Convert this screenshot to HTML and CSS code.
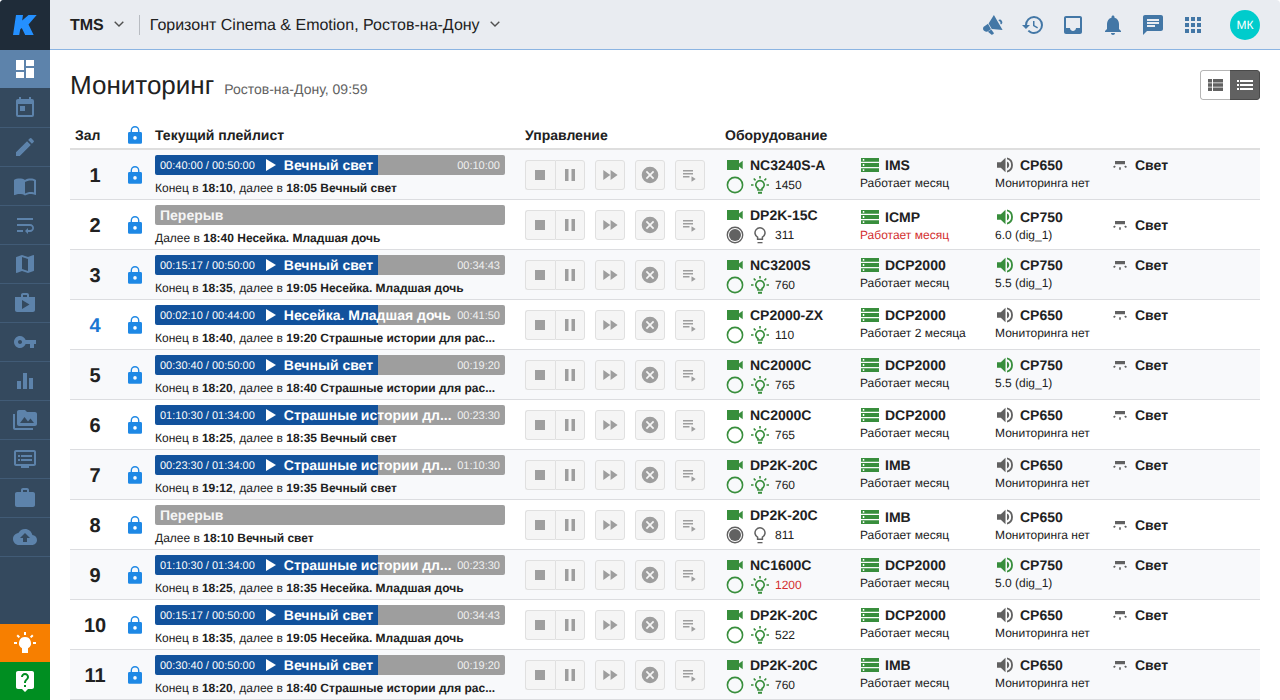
FILE: index.html
```html
<!DOCTYPE html>
<html lang="ru">
<head>
<meta charset="utf-8">
<title>TMS — Мониторинг</title>
<link rel="stylesheet" href="styles.css">
</head>
<body>
<svg class="sprite" aria-hidden="true">
  <symbol id="i-logo" viewBox="0 0 24 24"><path d="M3 2h7l-.8 5.500L15.500 2h8.200L15.500 11.500 20.700 22h-8.500L8.800 15 7.300 16.300 6.200 22H0Z"/></symbol>
  <symbol id="i-dashboard" viewBox="0 0 24 24"><path d="M3 13h8V3H3v10zm0 8h8v-6H3v6zm10 0h8V11h-8v10zm0-18v6h8V3h-8z"/></symbol>
  <symbol id="i-calendar" viewBox="0 0 24 24"><path d="M7,10H12V15H7M19,19H5V8H19M19,3H18V1H16V3H8V1H6V3H5C3.89,3 3,3.9 3,5V19A2,2 0 0,0 5,21H19A2,2 0 0,0 21,19V5A2,2 0 0,0 19,3Z"/></symbol>
  <symbol id="i-pencil" viewBox="0 0 24 24"><path d="M3 17.250V21h3.750L17.810 9.940l-3.750-3.750L3 17.250zM20.710 7.040c.39-.39.39-1.020 0-1.410l-2.340-2.340a1 1 0 0 0-1.410 0l-1.830 1.830 3.750 3.750 1.830-1.830z"/></symbol>
  <symbol id="i-book" viewBox="0 0 24 24"><path d="M21 5c-1.110-.35-2.330-.5-3.500-.5-1.950 0-4.050.4-5.500 1.500-1.450-1.100-3.550-1.500-5.500-1.500S2.450 4.900 1 6v14.650c0 .25.25.5.5.5.1 0 .15-.05.25-.05C3.100 20.450 5.050 20 6.500 20c1.950 0 4.050.4 5.500 1.500 1.350-.85 3.800-1.500 5.500-1.500 1.650 0 3.350.3 4.750 1.050.1.05.15.05.25.05.25 0 .5-.25.5-.5V6c-.6-.45-1.250-.75-2-1zm0 13.500c-1.100-.35-2.300-.5-3.500-.5-1.700 0-4.150.65-5.500 1.500V8c1.350-.85 3.800-1.500 5.500-1.500 1.200 0 2.400.15 3.500.5v11.500z"/></symbol>
  <symbol id="i-wrap" viewBox="0 0 24 24"><path d="M4 19h6v-2H4v2zM20 5H4v2h16V5zm-3 6H4v2h13.250c1.100 0 2 .9 2 2s-.9 2-2 2H15v-2l-3 3 3 3v-2h2c2.210 0 4-1.790 4-4s-1.790-4-4-4z"/></symbol>
  <symbol id="i-map" viewBox="0 0 24 24"><path d="M20.500 3l-.16.03L15 5.100 9 3 3.360 4.900c-.21.07-.36.25-.36.48V20.500c0 .28.22.5.5.5l.16-.03L9 18.900l6 2.100 5.640-1.900c.21-.07.36-.25.36-.48V3.500c0-.28-.22-.5-.5-.5zM15 19l-6-2.110V5l6 2.110V19z"/></symbol>
  <symbol id="i-shop" viewBox="0 0 24 24"><path d="M16 6V4c0-1.110-.89-2-2-2h-4c-1.110 0-2 .89-2 2v2H2v13c0 1.110.89 2 2 2h16c1.110 0 2-.89 2-2V6h-6zm-6-2h4v2h-4V4zM9 18V9l7.500 4.500L9 18z"/></symbol>
  <symbol id="i-key" viewBox="0 0 24 24"><path d="M12.650 10C11.830 7.670 9.610 6 7 6c-3.310 0-6 2.690-6 6s2.690 6 6 6c2.610 0 4.830-1.670 5.650-4H17v4h4v-4h2v-4H12.650zM7 14c-1.100 0-2-.9-2-2s.9-2 2-2 2 .9 2 2-.9 2-2 2z"/></symbol>
  <symbol id="i-chart" viewBox="0 0 24 24"><path d="M10 20h4V4h-4v16zm-6 0h4v-8H4v8zM16 9v11h4V9h-4z"/></symbol>
  <symbol id="i-media" viewBox="0 0 24 24"><path d="M2 6H0v14c0 1.100.9 2 2 2h18v-2H2V6zm20-2h-8l-2-2H6c-1.100 0-2 .9-2 2v12c0 1.100.9 2 2 2h16c1.100 0 2-.9 2-2V6c0-1.100-.9-2-2-2zM7 15l4.500-6 3.500 4.500 2.500-3L21 15H7z"/></symbol>
  <symbol id="i-dvr" viewBox="0 0 24 24"><path d="M21 3H3c-1.100 0-2 .9-2 2v12c0 1.100.9 2 2 2h5v2h8v-2h5c1.100 0 2-.9 2-2V5c0-1.100-.9-2-2-2zm0 14H3V5h18v12zm-2-9H8v2h11V8zm0 4H8v2h11v-2zM7 8H5v2h2V8zm0 4H5v2h2v-2z"/></symbol>
  <symbol id="i-work" viewBox="0 0 24 24"><path d="M20 6h-4V4c0-1.110-.89-2-2-2h-4c-1.110 0-2 .89-2 2v2H4c-1.110 0-2 .89-2 2v11c0 1.110.89 2 2 2h16c1.110 0 2-.89 2-2V8c0-1.110-.89-2-2-2zm-6 0h-4V4h4v2z"/></symbol>
  <symbol id="i-upload" viewBox="0 0 24 24"><path d="M19.350 10.040C18.670 6.590 15.640 4 12 4 9.110 4 6.600 5.640 5.350 8.040 2.340 8.360 0 10.910 0 14c0 3.310 2.690 6 6 6h13c2.760 0 5-2.240 5-5 0-2.640-2.050-4.780-4.650-4.960zM14 13v4h-4v-4H7l5-5 5 5h-3z"/></symbol>
  <symbol id="i-bulb-solid" viewBox="0 0 24 24"><path d="M12 6a6 6 0 0 1 3 11.200V22H9V17.200A6 6 0 0 1 12 6M20 11h3v2h-3zM1 11h3v2H1zM11 1h2v3h-2zM4.920 3.500l2.130 2.140-1.420 1.410L3.500 4.930zM16.950 5.630l2.120-2.130 1.430 1.430-2.130 2.120z"/></symbol>
  <symbol id="i-help" viewBox="0 0 24 24"><path d="M19 2H5c-1.110 0-2 .9-2 2v14c0 1.100.89 2 2 2h4l3 3 3-3h4c1.100 0 2-.9 2-2V4c0-1.100-.9-2-2-2zm-6 16h-2v-2h2v2zm2.070-7.750l-.9.92C13.450 11.900 13 12.500 13 14h-2v-.5c0-1.100.45-2.100 1.170-2.830l1.240-1.260c.37-.36.59-.86.59-1.410 0-1.100-.9-2-2-2s-2 .9-2 2H8c0-2.210 1.790-4 4-4s4 1.790 4 4c0 .88-.36 1.680-.93 2.250z"/></symbol>
  <symbol id="i-chevron" viewBox="0 0 10 6"><path d="M.7.7 5 5 9.300.7" fill="none" stroke="currentColor" stroke-width="1.400"/></symbol>
  <symbol id="i-horn" viewBox="0 0 24 24"><path d="M12.900 2 21.600 17 10.800 15.900 7.600 10.400ZM7 10.800 10 16.300 6.600 18.500A3.200 3.200 0 0 1 4.400 18.600 3.500 3.500 0 0 1 2.400 14ZM10.300 16.600 13 20.300Q12.100 21.900 10.600 21.700L6.900 18.800ZM17.400 7A2.600 2.600 0 0 1 20 11.500L19.200 10.200A1.200 1.200 0 0 0 18.100 8.300Z"/></symbol>
  <symbol id="i-history" viewBox="0 0 24 24"><path d="M13.500 8H12V13L16.280 15.540 17 14.330 13.500 12.250V8M13 3A9 9 0 0 0 4 12H1L4.960 16.030 9 12H6A7 7 0 0 1 13 5 7 7 0 0 1 20 12 7 7 0 0 1 13 19C11.070 19 9.320 18.210 8.060 16.940L6.640 18.360C8.270 20 10.500 21 13 21A9 9 0 0 0 22 12 9 9 0 0 0 13 3"/></symbol>
  <symbol id="i-inbox" viewBox="0 0 24 24"><path d="M19 3H5c-1.100 0-2 .9-2 2v14c0 1.100.9 2 2 2h14c1.100 0 2-.9 2-2V5c0-1.100-.9-2-2-2zm0 12h-4c0 1.660-1.350 3-3 3s-3-1.340-3-3H5V5h14v10z"/></symbol>
  <symbol id="i-bell" viewBox="0 0 24 24"><path d="M12 22c1.100 0 2-.9 2-2h-4c0 1.100.89 2 2 2zm6-6v-5c0-3.070-1.640-5.640-4.500-6.320V4c0-.83-.67-1.500-1.500-1.500s-1.500.67-1.500 1.500v.68C7.630 5.360 6 7.920 6 11v5l-2 2v1h16v-1l-2-2z"/></symbol>
  <symbol id="i-chat" viewBox="0 0 24 24"><path d="M20 2H4c-1.100 0-2 .9-2 2v18l4-4h14c1.100 0 2-.9 2-2V4c0-1.100-.9-2-2-2zM6 9h12v2H6V9zm8 5H6v-2h8v2zm4-6H6V6h12v2z"/></symbol>
  <symbol id="i-apps" viewBox="0 0 24 24"><path d="M4 4h4v4H4zM10 4h4v4h-4zM16 4h4v4h-4zM4 10h4v4H4zM10 10h4v4h-4zM16 10h4v4h-4zM4 16h4v4H4zM10 16h4v4h-4zM16 16h4v4h-4z"/></symbol>
  <symbol id="i-rows" viewBox="0 0 16 12"><path d="M0 0h4v3.500H0zM5 0h10v3.500H5zM0 4.300h4v3.400H0zM5 4.300h10v3.400H5zM0 8.500h4V12H0zM5 8.500h10V12H5z"/></symbol>
  <symbol id="i-list" viewBox="0 0 16 12"><path d="M0 1h2v2H0zM3 1h13v2H3zM0 5h2v2H0zM3 5h13v2H3zM0 9h2v2H0zM3 9h13v2H3z"/></symbol>
  <symbol id="i-lock" viewBox="0 0 14 18"><path fill-rule="evenodd" d="M12.600 6H11.400V4.400a4.400 4.400 0 0 0-8.800 0V6H1.400A1.400 1.400 0 0 0 0 7.400v9a1.400 1.400 0 0 0 1.400 1.400h11.200a1.400 1.400 0 0 0 1.400-1.400V7.400A1.400 1.400 0 0 0 12.600 6ZM7 13.700a1.800 1.800 0 1 1 0-3.600 1.800 1.800 0 0 1 0 3.600ZM10 6H4V4.400a3 3 0 0 1 6 0Z"/></symbol>
  <symbol id="i-play" viewBox="0 0 10 12"><path d="M0 0 10 6 0 12Z"/></symbol>
  <symbol id="i-stop" viewBox="0 0 18 18"><path d="M4 4h10v10H4z"/></symbol>
  <symbol id="i-pause" viewBox="0 0 18 18"><path d="M4 3h3.500v12H4zM10.500 3H14v12h-3.500z"/></symbol>
  <symbol id="i-forward" viewBox="0 0 18 18"><path d="M2.300 4l7 5-7 5zM9.600 4l7 5-7 5z"/></symbol>
  <symbol id="i-cancel" viewBox="0 0 18 18"><path fill-rule="evenodd" d="M9 .7a8.300 8.300 0 1 0 0 16.600A8.300 8.300 0 0 0 9 .7Zm4.200 11.300L12 13.200l-3-3-3 3L4.800 12l3-3-3-3L6 4.800l3 3 3-3L13.200 6l-3 3z"/></symbol>
  <symbol id="i-queue" viewBox="0 0 18 18"><path d="M2 4h10v1.500H2zM2 7h10v1.500H2zM2 10h6.500v1.500H2zM10.500 10.300l4.200 2.700-4.200 2.700z"/></symbol>
  <symbol id="i-camera" viewBox="0 0 16 10"><path d="M0 0H12V3.500L15.700.7V9.300L12 6.500V10H0Z"/></symbol>
  <symbol id="i-ring" viewBox="0 0 18 18"><circle cx="9" cy="9" r="7.600" fill="none" stroke="currentColor" stroke-width="1.600"/></symbol>
  <symbol id="i-disc" viewBox="0 0 18 18"><circle cx="9" cy="9" r="7.700" fill="none" stroke="currentColor" stroke-width="1.400"/><circle cx="9" cy="9" r="6"/></symbol>
  <symbol id="i-bulb-on" viewBox="0 0 18 18"><path d="M7 14V12.500A4.200 4.200 0 1 1 11 12.500V14Z" fill="none" stroke="currentColor" stroke-width="1.600"/><path d="M7 15.800h4v2H7zM0 8.300h2.500v1.500H0zM15.500 8.300H18v1.500h-2.500zM8.200 0h1.600v2.500H8.200zM2.200 3.100l1.100-1.100 1.800 1.800-1.100 1.100zM14.700 2l1.100 1.100-1.800 1.800-1.100-1.100z"/></symbol>
  <symbol id="i-bulb-off" viewBox="0 0 18 18"><path d="M6.600 13.300V11.200A5 5 0 1 1 11.400 11.200V13.300Z" fill="none" stroke="currentColor" stroke-width="1.500"/><path d="M6.500 16h5v1.300h-5z"/></symbol>
  <symbol id="i-server" viewBox="0 0 18 14"><path fill-rule="evenodd" d="M0 0h18v3.800H0zM1.800 1v1.800h1.500V1zM0 5.100h18v3.800H0zM1.800 6.100v1.800h1.500V6.100zM0 10.200h18V14H0zM1.800 11.200V13h1.500v-1.800z"/></symbol>
  <symbol id="i-sound" viewBox="0 0 16 16"><path d="M0 5.300H3.800L8.500.8V15.200L3.800 10.700H0ZM10 4.600a3.700 3.700 0 0 1 0 6.800ZM10 .5a7.700 7.700 0 0 1 0 15V13.700a6 6 0 0 0 0-11.400Z"/></symbol>
  <symbol id="i-lamp" viewBox="0 0 14 10"><path d="M2 1h10V4.200H2zM6.200 7.300h1.600v2.500H6.200zM1.700 5.500l1.100 1.200L1.200 8 0 6.800zM12.300 5.500 14 6.800 12.800 8l-1.600-1.300z"/></symbol>
</svg>

<div class="app">
  <nav class="side" aria-label="Разделы">
    <a class="side-logo" href="#" aria-label="Главная"><svg><use href="#i-logo"/></svg></a>
    <a class="side-item is-active" href="#" aria-label="Мониторинг"><svg><use href="#i-dashboard"/></svg></a>
    <a class="side-item" href="#" aria-label="Расписание"><svg><use href="#i-calendar"/></svg></a>
    <a class="side-item" href="#" aria-label="Редактор"><svg><use href="#i-pencil"/></svg></a>
    <a class="side-item" href="#" aria-label="Журнал"><svg><use href="#i-book"/></svg></a>
    <a class="side-item" href="#" aria-label="Плейлисты"><svg><use href="#i-wrap"/></svg></a>
    <a class="side-item" href="#" aria-label="Карта"><svg><use href="#i-map"/></svg></a>
    <a class="side-item" href="#" aria-label="Контент"><svg><use href="#i-shop"/></svg></a>
    <a class="side-item" href="#" aria-label="Ключи"><svg><use href="#i-key"/></svg></a>
    <a class="side-item" href="#" aria-label="Статистика"><svg><use href="#i-chart"/></svg></a>
    <a class="side-item" href="#" aria-label="Медиа"><svg><use href="#i-media"/></svg></a>
    <a class="side-item" href="#" aria-label="Экраны"><svg><use href="#i-dvr"/></svg></a>
    <a class="side-item" href="#" aria-label="Портфель"><svg><use href="#i-work"/></svg></a>
    <a class="side-item" href="#" aria-label="Загрузка"><svg><use href="#i-upload"/></svg></a>
    <div class="side-bottom">
      <a class="side-extra side-idea" href="#" aria-label="Идеи"><svg><use href="#i-bulb-solid"/></svg></a>
      <a class="side-extra side-help" href="#" aria-label="Помощь"><svg><use href="#i-help"/></svg></a>
    </div>
  </nav>

  <div class="body">
    <header class="top">
      <button class="top-menu top-product" type="button">TMS <svg><use href="#i-chevron"/></svg></button>
      <button class="top-menu top-cinema" type="button">Горизонт Cinema &amp; Emotion, Ростов-на-Дону <svg><use href="#i-chevron"/></svg></button>
      <div class="top-tools">
        <button type="button" aria-label="Объявления"><svg><use href="#i-horn"/></svg></button>
        <button type="button" aria-label="История"><svg><use href="#i-history"/></svg></button>
        <button type="button" aria-label="Входящие"><svg><use href="#i-inbox"/></svg></button>
        <button type="button" aria-label="Уведомления"><svg><use href="#i-bell"/></svg></button>
        <button type="button" aria-label="Сообщения"><svg><use href="#i-chat"/></svg></button>
        <button type="button" aria-label="Приложения"><svg><use href="#i-apps"/></svg></button>
      </div>
      <button class="avatar" type="button">МК</button>
    </header>

    <main class="main">
      <div class="heading">
        <h1>Мониторинг</h1>
        <span class="heading-note">Ростов-на-Дону, 09:59</span>
        <div class="view">
          <button type="button" aria-label="Подробно"><svg><use href="#i-rows"/></svg></button>
          <button class="is-active" type="button" aria-label="Список"><svg><use href="#i-list"/></svg></button>
        </div>
      </div>
      <table class="halls">
        <colgroup>
          <col class="c-hall"><col class="c-lock"><col class="c-list"><col class="c-ctrl">
          <col class="c-dev"><col class="c-dev"><col class="c-sound"><col>
        </colgroup>
        <thead>
          <tr>
            <th class="hall-head" scope="col">Зал</th>
            <th class="lock" scope="col"><svg><use href="#i-lock"/></svg></th>
            <th class="list" scope="col">Текущий плейлист</th>
            <th scope="col">Управление</th>
            <th colspan="4" scope="colgroup">Оборудование</th>
          </tr>
        </thead>
        <tbody id="halls"></tbody>
      </table>
    </main>
  </div>
</div>
<script src="app.js"></script>
</body>
</html>
```
FILE: app.js
```js
const LIGHT = 'Вечный свет';
const KID = 'Несейка. Младшая дочь';
const SCARY_SHORT = 'Страшные истории дл...';
const SCARY = 'Страшные истории для рас...';

// play: [elapsed, total, left, title, end]; next: [time, title]
const halls = [
  { play: ['00:40:00', '00:50:00', '00:10:00', LIGHT, '18:10'], next: ['18:05', LIGHT], proj: 'NC3240S-A', lamp: '1450', server: 'IMS' },
  { next: ['18:40', KID], proj: 'DP2K-15C', lamp: '311', server: 'ICMP', serverAlert: true, sound: '6.0 (dig_1)' },
  { play: ['00:15:17', '00:50:00', '00:34:43', LIGHT, '18:35'], next: ['19:05', KID], proj: 'NC3200S', lamp: '760', server: 'DCP2000', sound: '5.5 (dig_1)' },
  { play: ['00:02:10', '00:44:00', '00:41:50', KID, '18:40'], next: ['19:20', SCARY], proj: 'CP2000-ZX', lamp: '110', server: 'DCP2000', uptime: 'Работает 2 месяца', mine: true },
  { play: ['00:30:40', '00:50:00', '00:19:20', LIGHT, '18:20'], next: ['18:40', SCARY], proj: 'NC2000C', lamp: '765', server: 'DCP2000', sound: '5.5 (dig_1)' },
  { play: ['01:10:30', '01:34:00', '00:23:30', SCARY_SHORT, '18:25'], next: ['18:35', LIGHT], proj: 'NC2000C', lamp: '765', server: 'DCP2000' },
  { play: ['00:23:30', '01:34:00', '01:10:30', SCARY_SHORT, '19:12'], next: ['19:35', LIGHT], proj: 'DP2K-20C', lamp: '760', server: 'IMB' },
  { next: ['18:10', LIGHT], proj: 'DP2K-20C', lamp: '811', server: 'IMB' },
  { play: ['01:10:30', '01:34:00', '00:23:30', SCARY_SHORT, '18:25'], next: ['18:35', KID], proj: 'NC1600C', lamp: '1200', lampAlert: true, server: 'DCP2000', sound: '5.0 (dig_1)' },
  { play: ['00:15:17', '00:50:00', '00:34:43', LIGHT, '18:35'], next: ['19:05', KID], proj: 'DP2K-20C', lamp: '522', server: 'DCP2000' },
  { play: ['00:30:40', '00:50:00', '00:19:20', LIGHT, '18:20'], next: ['18:40', SCARY], proj: 'DP2K-20C', lamp: '760', server: 'IMB' },
];

const icon = (name, cls) => `<svg class="${cls}" aria-hidden="true"><use href="#i-${name}"/></svg>`;
const control = (name, label) => `<button type="button" aria-label="${label}">${icon(name, 'ctrl-icon')}</button>`;
const tone = (on) => (on ? 'on' : 'off');

function bar(play) {
  if (!play) return '<div class="bar bar-idle"><span class="bar-title">Перерыв</span></div>';
  const [elapsed, total, left, title] = play;
  return `<div class="bar bar-run"><span class="bar-time">${elapsed} / ${total}</span>${icon('play', 'bar-play')}` +
    `<span class="bar-title">${title}</span><span class="bar-time">${left}</span></div>`;
}

function row(h, i) {
  const [time, title] = h.next;
  const lead = h.play ? `Конец в <b>${h.play[4]}</b>, далее в` : 'Далее в';
  const lit = Boolean(h.play);
  return `<tr class="${lit ? 'running' : 'idle'}">
    <th class="hall${h.mine ? ' hall-mine' : ''}" scope="row">${i + 1}</th>
    <td class="lock">${icon('lock', '')}</td>
    <td class="list">${bar(h.play)}<div class="next">${lead} <b>${time} ${title}</b></div></td>
    <td class="ctrl"><div class="ctrl-row">
      <div class="ctrl-group">${control('stop', 'Стоп')}${control('pause', 'Пауза')}</div>
      ${control('forward', 'Вперёд')}${control('cancel', 'Отмена')}${control('queue', 'Очередь')}
    </div></td>
    <td class="dev dev-proj">
      <div class="dev-name">${icon('camera', 'camera on')}${h.proj}</div>
      <div class="dev-lamp">${icon(lit ? 'ring' : 'disc', tone(lit))}${icon(lit ? 'bulb-on' : 'bulb-off', tone(lit))}<span class="${h.lampAlert ? 'alert' : ''}">${h.lamp}</span></div>
    </td>
    <td class="dev">
      <div class="dev-name">${icon('server', 'server on')}${h.server}</div>
      <div class="dev-note ${h.serverAlert ? 'alert' : ''}">${h.uptime || 'Работает месяц'}</div>
    </td>
    <td class="dev">
      <div class="dev-name">${icon('sound', 'sound ' + tone(h.sound))}${h.sound ? 'CP750' : 'CP650'}</div>
      <div class="dev-note">${h.sound || 'Мониторинга нет'}</div>
    </td>
    <td class="dev"><div class="dev-name">${icon('lamp', 'lamp off')}Свет</div></td>
  </tr>`;
}

document.getElementById('halls').innerHTML = halls.map(row).join('');
```
FILE: styles.css
```css
* { box-sizing: border-box; }
body { margin: 0; background: #fff; color: #212121; font: 12px/16px "Liberation Sans", Arial, sans-serif; text-rendering: geometricPrecision; }
svg { display: block; flex: none; fill: currentColor; }
button { margin: 0; padding: 0; border: 0; background: none; color: inherit; font: inherit; text-rendering: inherit; }
.sprite { position: absolute; width: 0; height: 0; }

.app { display: flex; height: 100vh; overflow: hidden; border-radius: 4px 4px 0 0; }
.side { display: flex; flex: none; flex-direction: column; width: 50px; background: #34495e; color: #5d83ab; }
.side svg { width: 24px; height: 24px; }
.side a { display: flex; flex: none; align-items: center; justify-content: center; color: inherit; }
.side .side-logo { height: 50px; background: #1f2c39; color: #2490ff; }
.side-item { height: 39px; border-bottom: 1px solid #415b76; }
.side .side-item.is-active { background: #5d83ab; color: #fff; border-bottom-color: #34495e; }
.side-bottom { margin-top: auto; }
.side .side-extra { height: 38px; color: #fff; }
.side-idea { background: #f77f00; }
.side-help { background: #008e21; }

.body { flex: 1; min-width: 0; display: flex; flex-direction: column; }
.top { display: flex; flex: none; align-items: center; height: 50px; padding: 0 20px; background: #e9ecf1; border-bottom: 1px solid #8bb4e2; }
.top-menu { display: flex; align-items: center; gap: 10px; height: 20px; padding-top: 2px; font-size: 16px; line-height: 20px; }
.top-menu svg { width: 10px; height: 6px; margin-bottom: 3px; color: #505050; }
.top-product { padding-right: 15px; font-weight: bold; }
.top-cinema { padding-left: 10px; border-left: 1px solid #b8bcc2; }
.top-tools { display: flex; gap: 16px; margin-left: auto; margin-right: 25px; color: #4377a6; }
.top-tools svg { width: 24px; height: 24px; }
.avatar { width: 30px; height: 30px; border-radius: 50%; background: #00cccc; color: #fff; }

.main { flex: 1; min-height: 0; padding: 20px; overflow: hidden; }
.heading { display: flex; align-items: baseline; height: 51px; }
h1 { margin: 0; font-size: 26px; line-height: 30px; font-weight: normal; }
.heading-note { margin-left: 10px; color: #616161; font-size: 14px; }
.view { display: flex; align-self: flex-start; margin-left: auto; overflow: hidden; border-radius: 3px; }
.view button { display: flex; align-items: center; justify-content: center; width: 30px; height: 30px; border: 1px solid #b5b5b5; border-right: 0; border-radius: 3px 0 0 3px; color: #616161; }
.view .is-active { border: 1px solid #4a4a4a; border-left: 0; border-radius: 0 3px 3px 0; background: #616161; color: #fff; }
.view svg { width: 16px; height: 12px; }

.halls { width: 100%; table-layout: fixed; border-collapse: separate; border-spacing: 0; }
.c-hall { width: 50px; }
.c-lock { width: 30px; }
.c-list { width: 375px; }
.c-ctrl { width: 200px; }
.c-dev { width: 135px; }
.c-sound { width: 118px; }
.halls th, .halls td { padding: 5px 0 4px; border-bottom: 1px solid #dcdde0; text-align: left; }
.halls thead th { height: 29px; padding: 0; border-bottom: 2px solid #dedede; font-size: 14px; }
.halls thead .hall-head { padding-left: 5px; }
tbody tr:nth-child(odd) { background: #f8f9fb; }
.halls .hall { padding-top: 7px; text-align: center; font-size: 20px; line-height: 20px; }
.hall-mine { color: #1976d2; }
.lock svg { width: 14px; height: 18px; margin: 0 auto; color: #1e88e5; }
.halls .list { padding-left: 5px; padding-right: 20px; }

.bar { display: flex; align-items: center; height: 20px; padding: 0 5px; border-radius: 2px; background: #9e9e9e; color: #fff; white-space: nowrap; }
.bar-run { background: linear-gradient(to right, #12529c 223px, #9e9e9e 223px); }
.bar-time { padding-top: 1px; font-size: 11px; }
.bar-play { width: 10px; height: 12px; margin: 0 8px 0 11px; }
.bar-title { flex: 1; font-size: 14px; line-height: 20px; font-weight: bold; }
.bar-time:last-child { color: #f0f0f0; }
.bar-idle { color: #f5f5f5; }
.next { margin-top: 6px; line-height: 14px; white-space: nowrap; }

.ctrl-row { display: flex; gap: 10px; color: #9e9e9e; }
.ctrl-group { display: flex; }
.ctrl-row button { display: flex; align-items: center; justify-content: center; width: 30px; height: 30px; border: 1px solid #e0e0e0; border-radius: 3px; background: #f5f5f5; }
.ctrl-group button:first-child { padding-right: 1px; border-right: 0; border-radius: 3px 0 0 3px; }
.ctrl-group button:last-child { border-radius: 0 3px 3px 0; }
.ctrl-icon { width: 18px; height: 18px; }

.halls .dev { vertical-align: middle; }
.halls .running .dev, .halls .dev-proj { vertical-align: top; }
.dev-name { display: flex; align-items: center; height: 20px; font-size: 14px; font-weight: bold; }
.dev-lamp { display: flex; align-items: center; gap: 7px; height: 20px; padding-left: 1px; }
.dev-lamp span { margin-left: -1px; }
.dev-lamp svg { width: 18px; height: 18px; }
.camera { width: 16px; height: 10px; margin: 0 7px 0 2px; }
.server { width: 18px; height: 14px; margin: 0 6px 0 1px; }
.sound { width: 16px; height: 16px; margin: 0 7px 0 2px; }
.lamp { width: 14px; height: 10px; margin-right: 8px; }
.on { color: #388e3c; }
.off { color: #616161; }
.alert { color: #d32f2f; }
```
